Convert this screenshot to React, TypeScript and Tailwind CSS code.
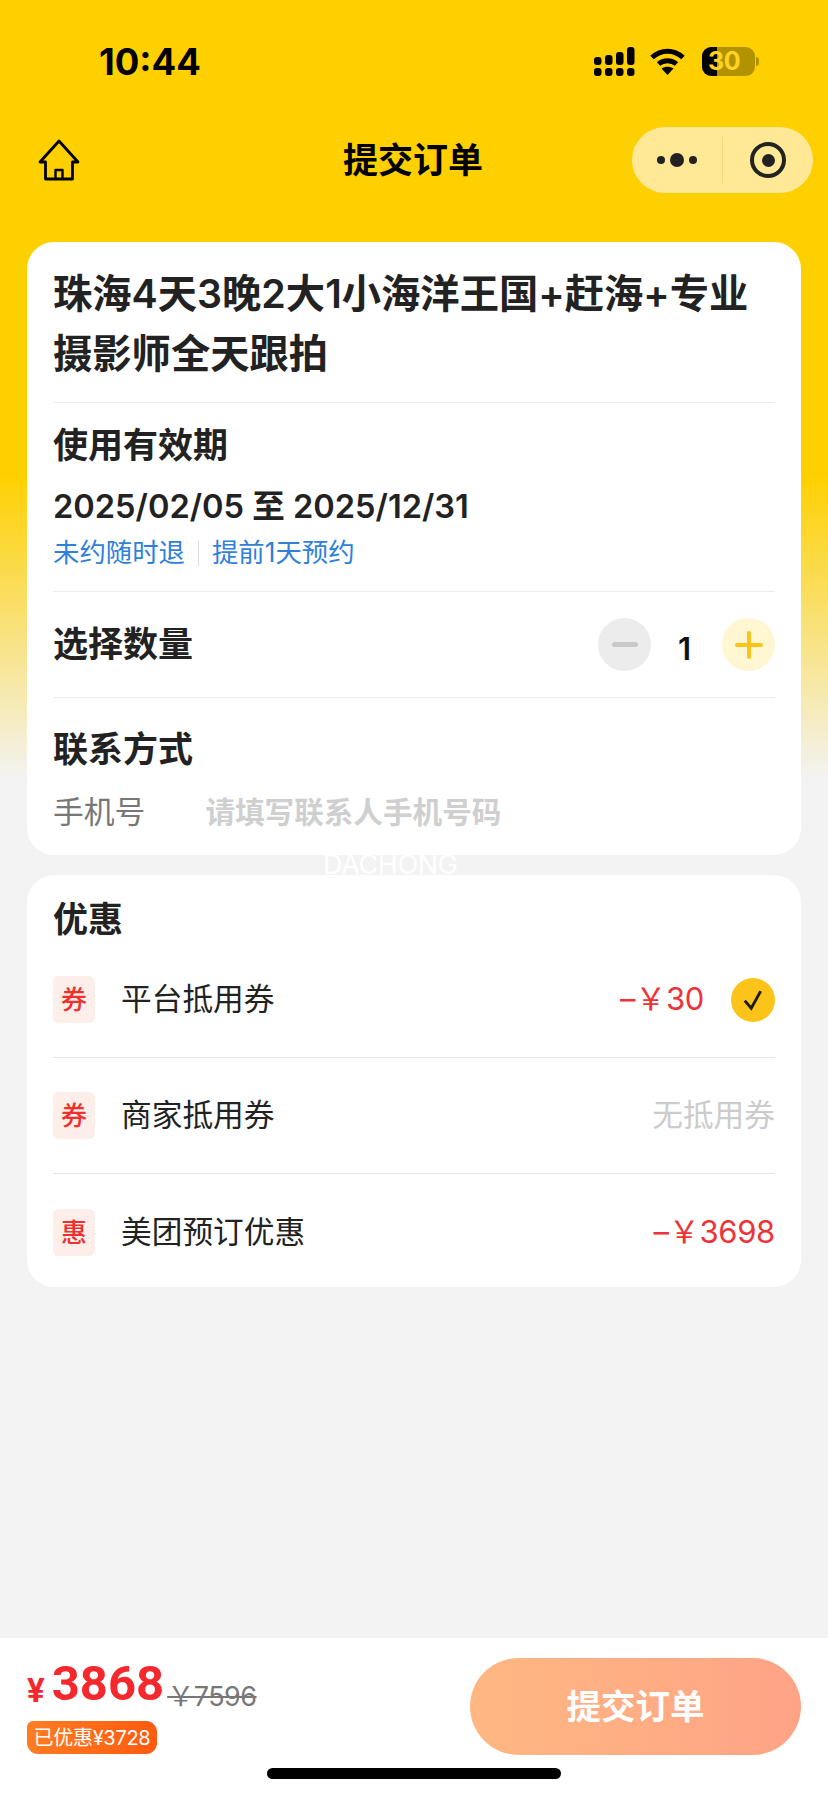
const font = "font-['Inter','Noto_Sans_CJK_SC',sans-serif]";

function Signal() {
  const cols = [
    { x: 0, top: 10 },
    { x: 11, top: 8 },
    { x: 22, top: 5 },
    { x: 33, top: 0 },
  ];
  return (
    <svg width="41" height="29" viewBox="0 0 41 29" fill="#000">
      {cols.map((c) => (
        <g key={c.x}>
          <rect x={c.x} y={c.top} width="7.5" height={18 - c.top} rx="3" />
          <rect x={c.x} y="21" width="7.5" height="8" rx="3" />
        </g>
      ))}
    </svg>
  );
}

function Wifi() {
  return (
    <svg width="35" height="27" viewBox="0 0 35 27" fill="none" stroke="#000" strokeWidth="5">
      <path d="M2 9.5C11 1 24 1 33 9.5" />
      <path d="M8.5 16C13.5 11.5 21.5 11.5 26.5 16" />
      <path d="M17.5 27L11.5 20.5C15 18 20 18 23.5 20.5Z" fill="#000" stroke="none" />
    </svg>
  );
}

function Battery() {
  return (
    <div className="relative ml-[2px] flex h-[29px] w-[57px] items-center">
      <div className="flex h-[29px] w-[53px] overflow-hidden rounded-[9px]">
        <div className="h-full w-[15px] bg-black" />
        <div className="h-full flex-1 bg-[#b39200]" />
      </div>
      <div className="ml-[1px] h-[9px] w-[3px] rounded-r-full bg-[#b39200]" />
      <span className="absolute left-[6px] top-0 text-[25px] leading-[29px] font-bold tracking-[-0.5px] text-[#ffd21f]">30</span>
    </div>
  );
}

function HomeIcon() {
  return (
    <svg width="42" height="42" viewBox="0 0 42 42" fill="none" stroke="#000" strokeWidth="2.8" strokeLinejoin="round">
      <path d="M21 2L2 23H7.5V40H34.5V23H40L21 2Z" />
      <path d="M17.5 40V31H24.5V40" strokeWidth="2.4" />
    </svg>
  );
}

function Divider() {
  return <div className="h-px bg-[#ececec]" />;
}

function Coupon({ badge, label, children, last }: { badge: string; label: string; children: React.ReactNode; last?: boolean }) {
  return (
    <div className={`flex h-[116px] items-center ${last ? "" : "border-b border-[#e4e4e4]"}`}>
      <div className="flex h-[47px] w-[42px] items-center justify-center rounded-[6px] bg-[#fdeeea] text-[26px] font-medium text-[#f0302e]">
        {badge}
      </div>
      <span className="ml-[26px] text-[30.7px] text-[#222]">{label}</span>
      <div className="ml-auto flex items-center">{children}</div>
    </div>
  );
}

function Price({ value }: { value: string }) {
  return <span className="text-[31px] tracking-[-0.3px] text-[#ee3338]">{value}</span>;
}

export default function App() {
  return (
    <div className={`${font} relative flex h-[1796px] w-[828px] flex-col overflow-hidden bg-[linear-gradient(180deg,#ffd000_0px,#ffd000_475px,#f3f3f3_780px)]`}>
      <div className="flex h-[122px] items-start pl-[99px] pr-[69px] pt-[44px]">
        <span className="text-[36.5px] leading-[36px] font-bold text-black">10:44</span>
        <div className="ml-auto flex items-center gap-[15px] pt-[3px]">
          <Signal />
          <Wifi />
          <Battery />
        </div>
      </div>

      <div className="relative flex h-[76px] items-center pl-[38px] pr-[15px]">
        <HomeIcon />
        <span className="ml-[263px] text-[35px] font-bold text-black">提交订单</span>
        <div className="ml-auto flex h-[66px] w-[181px] items-center rounded-full bg-[#ffe896]">
          <div className="flex flex-1 items-center justify-center gap-[5px]">
            <span className="h-[8px] w-[8px] rounded-full bg-[#222]" />
            <span className="h-[14px] w-[14px] rounded-full bg-[#222]" />
            <span className="h-[8px] w-[8px] rounded-full bg-[#222]" />
          </div>
          <div className="h-[46px] w-px bg-[#f5d97a]" />
          <div className="flex flex-1 items-center justify-center">
            <div className="flex h-[36px] w-[36px] items-center justify-center rounded-full border-[4px] border-[#222]">
              <span className="h-[13px] w-[13px] rounded-full bg-[#222]" />
            </div>
          </div>
        </div>
      </div>

      <div className="mx-[27px] mt-[44px] h-[613px] rounded-[27px] bg-white px-[26px] text-[#222]">
        <div className="h-[160px] pt-[22px] text-[39.3px] leading-[60px] font-semibold">
          珠海4天3晚2大1小海洋王国+赶海+专业
          <br />
          摄影师全天跟拍
        </div>
        <Divider />
        <div className="h-[188px]">
          <div className="flex h-[85px] items-center text-[35px] font-semibold">使用有效期</div>
          <div className="mt-[2px] flex h-[32px] items-center text-[32.6px] font-semibold">2025/02/05 至 2025/12/31</div>
          <div className="mt-[12px] flex h-[38px] items-center text-[26.4px] text-[#2f7fdb]">
            <span>未约随时退</span>
            <span className="mx-[13px] h-[26px] w-px bg-[#ddd]" />
            <span>提前1天预约</span>
          </div>
        </div>
        <Divider />
        <div className="flex h-[105px] items-center">
          <span className="text-[35px] font-semibold">选择数量</span>
          <div className="ml-auto flex items-center">
            <div className="flex h-[53px] w-[53px] items-center justify-center rounded-full bg-[#ececec]">
              <span className="h-[5px] w-[26px] rounded-full bg-[#c8c8c8]" />
            </div>
            <span className="flex w-[71px] justify-center pr-[4px] pt-[10px] text-[31px] font-semibold text-[#111]">1</span>
            <div className="relative flex h-[53px] w-[53px] items-center justify-center rounded-full bg-[#fff6d2]">
              <svg width="28" height="28" viewBox="0 0 28 28" stroke="#fcc419" strokeWidth="4" strokeLinecap="round">
                <path d="M2 14H26M14 2V26" />
              </svg>
            </div>
          </div>
        </div>
        <Divider />
        <div className="flex h-[101px] items-center pt-[2px] text-[35px] font-semibold">联系方式</div>
        <div className="flex h-[26px] items-center">
          <span className="text-[30.8px] text-[#777]">手机号</span>
          <span className="ml-[60px] text-[29.6px] font-semibold text-[#cfcfcf]">请填写联系人手机号码</span>
        </div>
      </div>

      <span className="absolute left-[323px] top-[850px] text-[27px] leading-[30px] tracking-[-0.4px] text-white">DACHONG</span>

      <div className="mx-[27px] mt-[20px] h-[412px] rounded-[27px] bg-white px-[26px]">
        <div className="flex h-[67px] items-start pt-[19px] text-[35px] leading-[50px] font-semibold text-[#222]">优惠</div>
        <Coupon badge="券" label="平台抵用券">
          <Price value="–￥30" />
          <div className="ml-[27px] flex h-[44px] w-[44px] items-center justify-center rounded-full bg-[#fcc419]">
            <svg width="26" height="26" viewBox="0 0 22 22" fill="none" stroke="#1a1a1a" strokeWidth="2.4">
              <path d="M4 11.5L9.5 18L17.5 3.5" />
            </svg>
          </div>
        </Coupon>
        <Coupon badge="券" label="商家抵用券">
          <span className="text-[30.7px] text-[#cccccc]">无抵用券</span>
        </Coupon>
        <Coupon badge="惠" label="美团预订优惠" last>
          <Price value="–￥3698" />
        </Coupon>
      </div>

      <div className="mt-auto h-[158px] bg-white pl-[27px] pr-[27px]">
        <div className="flex h-[117px] items-start pt-[20px]">
          <div className="flex flex-col">
            <div className="flex h-[63px] items-end">
              <span className="pb-[12px] font-['Roboto'] text-[33px] leading-[36px] font-bold text-[#f5282d]">¥</span>
              <span className="ml-[7px] pb-[9px] font-['Roboto'] text-[49px] leading-[56px] font-bold text-[#f5282d]">3868</span>
              <span className="ml-[3px] pb-[6px] text-[27px] leading-[36px] tracking-[-0.5px] text-[#777] line-through">￥7596</span>
            </div>
            <div className="flex h-[33px] w-[130px] items-center justify-center rounded-[11px] rounded-tl-[6px] bg-[linear-gradient(90deg,#ff7d22,#ff5a10)] text-[20px] tracking-[-0.3px] text-white">
              已优惠¥3728
            </div>
          </div>
          <div className="ml-auto flex h-[97px] w-[331px] items-center justify-center rounded-full bg-[linear-gradient(90deg,#ffb882,#ffa386)] text-[34.5px] font-bold text-white">
            提交订单
          </div>
        </div>
        <div className="mx-auto mt-[13px] h-[11px] w-[294px] rounded-full bg-black" />
      </div>
    </div>
  );
}
